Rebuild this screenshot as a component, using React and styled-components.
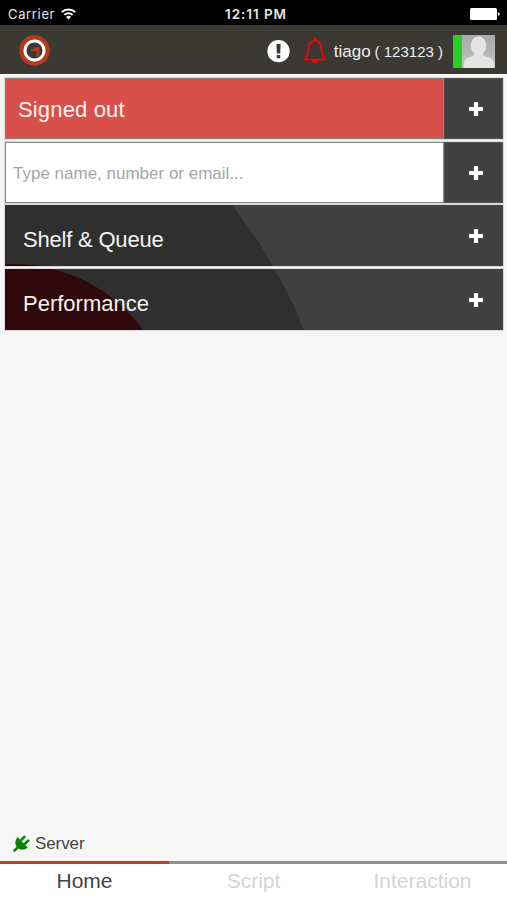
import { useState } from "react";
import styled, { createGlobalStyle } from "styled-components";


const GlobalStyle = createGlobalStyle`
    * {
        box-sizing: border-box;
    }
    body {
        margin: 0;
        background: #f6f6f6;
        font-family: "Liberation Sans", Arial, sans-serif;
    }
`;

const PlusIcon = () => (
    <svg width="14" height="14" viewBox="0 0 14 14" fill="#ffffff">
        <path d="M5.4 0h3.2q.5 0 .5.5v4.4h4.4q.5 0 .5.5v3.2q0 .5-.5.5H9.1v4.4q0 .5-.5.5H5.4q-.5 0-.5-.5V9.1H.5Q0 9.1 0 8.6V5.4q0-.5.5-.5h4.4V.5q0-.5.5-.5z" />
    </svg>
)

const WifiIcon = () => (
    <svg width="15" height="12" viewBox="0 0 15 12" fill="none" stroke="#ffffff" strokeWidth="1.9">
        <path d="M.8 4.2a9.5 9.5 0 0 1 13.4 0" />
        <path d="M3.4 6.9a5.8 5.8 0 0 1 8.2 0" />
        <path d="M7.5 11.4 5 8.9a3.6 3.6 0 0 1 5 0z" fill="#ffffff" stroke="none" />
    </svg>
)

const BatteryIcon = () => (
    <svg width="30" height="12" viewBox="0 0 30 12" fill="#ffffff">
        <rect x="0" y="0" width="27" height="12" rx="1.5" />
        <path d="M28 4q1.7.6 1.7 2T28 8z" />
    </svg>
)

const Logo = () => (
    <svg width="32" height="32" viewBox="0 0 32 32">
        <circle cx="16.5" cy="15.5" r="15.3" fill="#b6371b" />
        <circle cx="16.5" cy="15.5" r="9.5" fill="#3a3933" stroke="#ffffff" strokeWidth="3" />
        <path d="M13 14.6q3.4-.4 4.6-2.6h3.8v8.6l-3 1.8v-6.2H13z" fill="#b6371b" />
    </svg>
)

const AlertIcon = () => (
    <svg width="23" height="23" viewBox="0 0 23 23">
        <circle cx="11.5" cy="11.2" r="11.1" fill="#ffffff" />
        <path d="M9.4 4h4.2l-.4 9.6H9.8z M9.8 15h3.4v3.3H9.8z" fill="#3a3933" />
    </svg>
)

const BellIcon = () => (
    <svg width="24" height="26" viewBox="0 0 24 26" fill="none" stroke="#f00505" strokeWidth="1.9">
        <path d="M12 2.8c-3.8 0-5.9 2.8-6.2 6.6C5.4 15 4 18.5 1.4 21.6h21.2C20 18.5 18.6 15 18.2 9.4c-.3-3.8-2.4-6.6-6.2-6.6z" strokeLinejoin="round" />
        <path d="M12 .2v2.4" strokeWidth="2.4" />
        <path d="M8.8 22h6.4a3.2 3.2 0 0 1-6.4 0z" fill="#f00505" stroke="none" />
    </svg>
)

const PlugIcon = () => (
    <svg width="17" height="17" viewBox="0 0 17 17" stroke="#078507" fill="#078507" strokeLinecap="round">
        <path d="M1.4 15.6 5 12" strokeWidth="2.6" />
        <path d="M8.4 4.8 11.4 1.8M12.2 8.6l3-3" strokeWidth="2.6" />
        <path d="M4.6 2.6 14.4 12.4C11.4 14.9 7.3 15.1 4.6 12.4 1.9 9.7 2 5.6 4.6 2.6z" strokeWidth=".6" />
    </svg>
)

const AvatarPicture = () => (
    <svg width="33" height="33" viewBox="0 0 33 33">
        <defs>
            <linearGradient id="avatarShade" x1="0" y1="0" x2="0" y2="1">
                <stop offset="0" stopColor="#a8a8a8" />
                <stop offset="1" stopColor="#c4c4c4" />
            </linearGradient>
        </defs>
        <rect width="33" height="33" fill="url(#avatarShade)" />
        <ellipse cx="16.5" cy="10.5" rx="7.8" ry="9.2" fill="#e4e4e4" />
        <path d="M12 16h9v4.5c5 1.8 10.5 2.4 11 8V33H2v-4.5c.5-5.6 5.5-6.2 10-8z" fill="#e4e4e4" />
    </svg>
)

// both panels show a slice of the same pair of circles
const Circles = ({offset}) => (
    <Backdrop width="498" height="61" viewBox={`0 ${offset} 498 61`}>
        <circle cx="-194.5" cy="328" r="534" fill="#2f2f2f" />
        <circle cx="10.5" cy="216" r="157" fill="#30080b" />
    </Backdrop>
)

const tabs = ['Home', 'Script', 'Interaction'];

const App = () => {

    const [selectedTab, setSelectedTab] = useState('Home');

    return <Screen>
        <GlobalStyle />
        <StatusBar>
            <Carrier>Carrier <WifiIcon /></Carrier>
            <Clock>12:11 PM</Clock>
            <Battery><BatteryIcon /></Battery>
        </StatusBar>
        <Header>
            <Logo />
            <UserArea>
                <Alerts>
                    <AlertIcon />
                    <BellIcon />
                </Alerts>
                <UserName>tiago <Extension>( 123123 )</Extension></UserName>
                <Avatar><AvatarPicture /></Avatar>
            </UserArea>
        </Header>
        <Panels>
            <Panel>
                <Status>Signed out</Status>
                <AddButton $divided><PlusIcon /></AddButton>
            </Panel>
            <Panel>
                <SearchInput placeholder="Type name, number or email..." />
                <AddButton $divided><PlusIcon /></AddButton>
            </Panel>
            <Panel>
                <Circles offset={0} />
                <PanelTitle $spacing="-0.2px">Shelf &amp; Queue</PanelTitle>
                <AddButton><PlusIcon /></AddButton>
            </Panel>
            <Panel>
                <Circles offset={63.5} />
                <PanelTitle>Performance</PanelTitle>
                <AddButton><PlusIcon /></AddButton>
            </Panel>
        </Panels>
        <Server><PlugIcon />Server</Server>
        <TabBar>
            {tabs.map((tab) => (
                <Tab key={tab} $active={selectedTab === tab} onClick={() => setSelectedTab(tab)}>{tab}</Tab>
            ))}
        </TabBar>
    </Screen>
}

export default App;


const Screen = styled.div`
    display: flex;
    flex-direction: column;
    height: 900px;
    width: 100%;
    overflow: hidden;
`;

const StatusBar = styled.div`
    display: grid;
    grid-template-columns: 1fr auto 1fr;
    align-items: center;
    height: 25px;
    padding: 2px 7px 0 8px;
    background: #000000;
    color: #e8e8e8;
    font-family: Inter, sans-serif;
    font-size: 13px;
`;

const Carrier = styled.div`
    display: flex;
    align-items: center;
    gap: 6px;
    letter-spacing: 0.65px;
`;

const Clock = styled.div`
    padding-left: 4px;
    font-size: 13.5px;
    font-weight: 600;
    letter-spacing: 0.95px;
`;

const Battery = styled.div`
    display: flex;
    justify-content: flex-end;
`;

const Header = styled.div`
    display: flex;
    align-items: center;
    justify-content: space-between;
    height: 49px;
    padding: 3px 12px 0 18px;
    background: #3a3933;
`;

const UserArea = styled.div`
    display: flex;
    align-items: center;
`;

const Alerts = styled.div`
    display: flex;
    align-items: center;
    gap: 13px;
`;

const UserName = styled.div`
    display: flex;
    align-items: baseline;
    gap: 4px;
    margin-left: 7px;
    padding-top: 1px;
    color: #eeeeee;
    font-size: 17px;
    white-space: nowrap;
`;

const Extension = styled.span`
    font-size: 15px;
`;

const Avatar = styled.div`
    display: flex;
    height: 33px;
    margin-left: 10px;
    border-left: 9px solid #27cf27;
`;

const Panels = styled.div`
    display: flex;
    flex-direction: column;
    gap: 2.5px;
    padding: 3px 4px 0 5px;
    border-top: 1px solid #ffffff;
`;

const Panel = styled.div`
    position: relative;
    display: flex;
    height: 61px;
    background: #404040;
    outline: 1px solid #d9d9d9;
`;

const Backdrop = styled.svg`
    position: absolute;
    top: 0;
    left: 0;
`;

const Status = styled.div`
    flex: 1;
    padding-left: 12px;
    border: 1px solid #8a8380;
    background: #d9504b;
    color: #fff3f0;
    font-size: 22px;
    letter-spacing: 0.15px;
    line-height: 61px;
`;

const SearchInput = styled.input`
    flex: 1;
    min-width: 0;
    padding: 3px 7px 0;
    border: 1px solid #888888;
    border-radius: 0;
    outline: none;
    background: #ffffff;
    font-family: inherit;
    font-size: 17px;

    &::placeholder {
        color: #a6a6a6;
    }
`;

const PanelTitle = styled.div`
    position: relative;
    flex: 1;
    padding-left: 18px;
    color: #f2f2f2;
    font-size: 22px;
    letter-spacing: ${({$spacing}) => $spacing || 'normal' };
    line-height: 69px;
`;

const AddButton = styled.button`
    position: relative;
    display: flex;
    justify-content: center;
    width: 59px;
    padding: 24px 0 0 4px;
    border: none;
    background: #404040;
    cursor: pointer;
    ${({$divided}) => $divided && `
        border: 1px solid #555555;
        padding-top: 23px;
    `}
`;

const Server = styled.div`
    display: flex;
    align-items: center;
    gap: 5px;
    margin-top: auto;
    padding: 0 0 7px 13px;
    color: #444444;
    font-size: 17px;
    letter-spacing: -0.1px;
`;

const TabBar = styled.div`
    display: grid;
    grid-template-columns: repeat(3, 1fr);
    height: 39.5px;
    background: #ffffff;
`;

const Tab = styled.button`
    padding: 0 0 2px;
    border: none;
    border-top: 3px solid #909090;
    background: #ffffff;
    color: #d4d4d4;
    font-family: inherit;
    font-size: 21px;
    cursor: pointer;
    ${({$active}) => $active && `
        border-top-color: #c63d1b;
        color: #444444;
    `}
`;
